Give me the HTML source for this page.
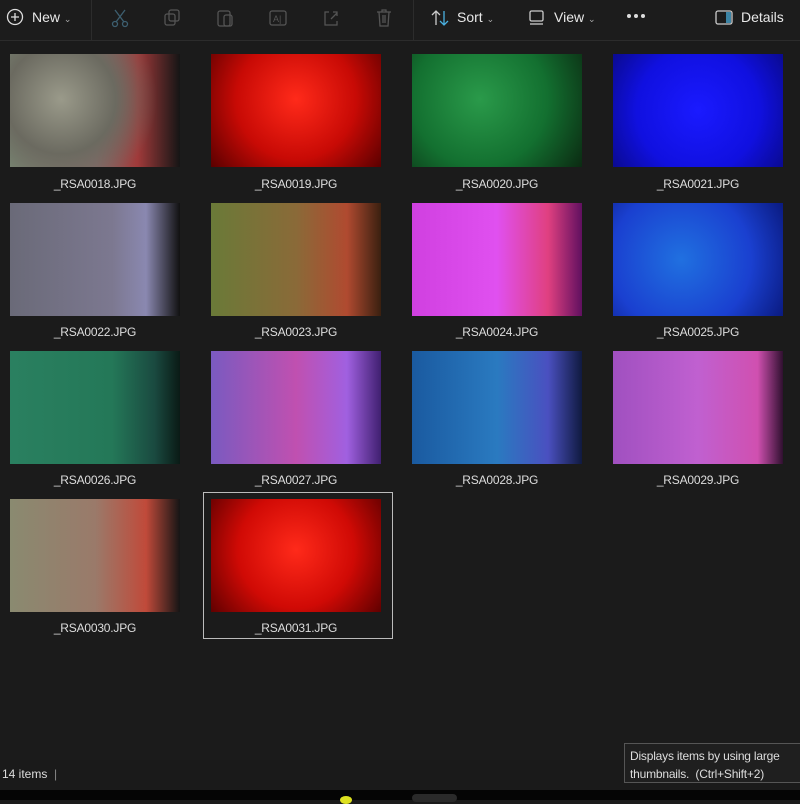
<!DOCTYPE html>
<html><head><style>
body{margin:0;width:800px;height:800px;background:#1b1b1b;font-family:"Liberation Sans",sans-serif;color:#e6e6e6;position:relative;overflow:hidden}
.tb{position:absolute;left:0;top:0;width:800px;height:40px;background:#1c1c1c;border-bottom:1px solid #2c2c2c}
.t{position:absolute;top:9px;font-size:14px;color:#e8e8e8}
.ic{position:absolute;top:7px}
.th{position:absolute;width:170px;height:113px}
.lb{position:absolute;width:170px;text-align:center;font-size:12px;color:#ddd;letter-spacing:-0.2px}
.sel{position:absolute;left:203px;top:492px;width:188px;height:145px;border:1px solid #bbb}
</style></head><body>
<div class="tb">
<svg class="ic" style="left:6px" width="20" height="20" viewBox="0 0 20 20"><circle cx="9" cy="10" r="7.5" fill="none" stroke="#ddd" stroke-width="1.3"/><path d="M9 6v8M5 10h8" stroke="#ddd" stroke-width="1.3"/></svg>
<div class="t" style="left:32px">New <span style="font-size:9px;color:#aaa">&#8964;</span></div>
<div style="position:absolute;left:91px;top:0;width:1px;height:40px;background:#2c2c2c"></div>
<svg class="ic" style="left:110px" width="20" height="22" viewBox="0 0 20 22"><path d="M5 3l9 12M15 3L6 15" stroke="#3d5f70" stroke-width="1.3" fill="none"/><circle cx="5" cy="17" r="2.5" fill="none" stroke="#3d5f70" stroke-width="1.3"/><circle cx="15" cy="17" r="2.5" fill="none" stroke="#3d5f70" stroke-width="1.3"/></svg>
<svg class="ic" style="left:163px" width="20" height="22" viewBox="0 0 20 22"><rect x="2" y="7" width="10" height="11" rx="2" fill="none" stroke="#555" stroke-width="1.3"/><rect x="6" y="3" width="10" height="11" rx="2" fill="none" stroke="#555" stroke-width="1.3"/></svg>
<svg class="ic" style="left:216px" width="20" height="22" viewBox="0 0 20 22"><rect x="2" y="4" width="12" height="15" rx="2" fill="none" stroke="#555" stroke-width="1.3"/><rect x="8" y="8" width="8" height="11" rx="2" fill="none" stroke="#555" stroke-width="1.3"/></svg>
<svg class="ic" style="left:268px" width="20" height="22" viewBox="0 0 20 22"><rect x="2" y="4" width="16" height="14" rx="2" fill="none" stroke="#555" stroke-width="1.3"/><text x="5" y="15" font-size="9" fill="#555">A|</text></svg>
<svg class="ic" style="left:321px" width="20" height="22" viewBox="0 0 20 22"><path d="M8 5H4v13h12v-4M10 12l6-6M12 5h4v4" fill="none" stroke="#555" stroke-width="1.3"/></svg>
<svg class="ic" style="left:374px" width="20" height="22" viewBox="0 0 20 22"><path d="M3 5h14M8 5V3h4v2M5 5l1 14h8l1-14M9 8v8M11 8v8" fill="none" stroke="#555" stroke-width="1.3"/></svg>
<div style="position:absolute;left:413px;top:0;width:1px;height:40px;background:#2c2c2c"></div>
<svg class="ic" style="left:430px" width="20" height="22" viewBox="0 0 20 22"><path d="M6 18V4M2 8l4-4 4 4" fill="none" stroke="#ccc" stroke-width="1.3"/><path d="M14 4v14M10 14l4 4 4-4" fill="none" stroke="#4ab0e0" stroke-width="1.3"/></svg>
<div class="t" style="left:457px">Sort <span style="font-size:9px;color:#aaa">&#8964;</span></div>
<svg class="ic" style="left:528px" width="18" height="22" viewBox="0 0 18 22"><rect x="2" y="4" width="13" height="10" rx="1.5" fill="none" stroke="#ccc" stroke-width="1.3"/><path d="M2 17h13" stroke="#ccc" stroke-width="1.3"/></svg>
<div class="t" style="left:554px">View <span style="font-size:9px;color:#aaa">&#8964;</span></div>
<svg style="position:absolute;left:626px;top:13px" width="20" height="6"><circle cx="3" cy="3" r="2" fill="#ddd"/><circle cx="10" cy="3" r="2" fill="#ddd"/><circle cx="17" cy="3" r="2" fill="#ddd"/></svg>
<svg class="ic" style="left:714px" width="20" height="22" viewBox="0 0 20 22"><rect x="2" y="4" width="16" height="13" rx="2" fill="none" stroke="#ccc" stroke-width="1.3"/><rect x="12" y="5" width="5" height="11" fill="#4ab0e0" opacity=".7"/></svg>
<div class="t" style="left:741px">Details</div>
</div>

<div class="th" style="left:10px;top:54px;background:radial-gradient(circle at 30% 40%,#9a9a8a,#6b6a60 40%,transparent 70%),linear-gradient(90deg,#7a8a75,#8a6b6a 50%,#a03a3a 75%,#151515)"></div>
<div class="th" style="left:211px;top:54px;background:radial-gradient(circle at 50% 40%,#ff2a1a,#c80a05 55%,#5a0000)"></div>
<div class="th" style="left:412px;top:54px;background:radial-gradient(circle at 40% 40%,#2a9a4a,#137030 55%,#0b2a12)"></div>
<div class="th" style="left:613px;top:54px;background:radial-gradient(circle at 50% 50%,#1a1aff,#1010e0 60%,#0a0a90)"></div>
<div class="lb" style="left:10px;top:177px">_RSA0018.JPG</div>
<div class="lb" style="left:211px;top:177px">_RSA0019.JPG</div>
<div class="lb" style="left:412px;top:177px">_RSA0020.JPG</div>
<div class="lb" style="left:613px;top:177px">_RSA0021.JPG</div>

<div class="th" style="left:10px;top:203px;background:linear-gradient(90deg,#6a6a78,#7c7890 60%,#8a88b0 80%,#111)"></div>
<div class="th" style="left:211px;top:203px;background:linear-gradient(90deg,#6a7a38,#8a6a38 50%,#b04a30 80%,#3a2010)"></div>
<div class="th" style="left:412px;top:203px;background:linear-gradient(90deg,#d040e0,#e050f0 50%,#e04080 80%,#601060)"></div>
<div class="th" style="left:613px;top:203px;background:radial-gradient(circle at 40% 50%,#2070e0,#1a40d0 60%,#0a1a80)"></div>
<div class="lb" style="left:10px;top:325px">_RSA0022.JPG</div>
<div class="lb" style="left:211px;top:325px">_RSA0023.JPG</div>
<div class="lb" style="left:412px;top:325px">_RSA0024.JPG</div>
<div class="lb" style="left:613px;top:325px">_RSA0025.JPG</div>

<div class="th" style="left:10px;top:351px;background:linear-gradient(90deg,#2a8060,#247858 60%,#1a4a40 85%,#0a1a15)"></div>
<div class="th" style="left:211px;top:351px;background:linear-gradient(90deg,#7a5ac0,#c050b0 50%,#a060e0 80%,#402070)"></div>
<div class="th" style="left:412px;top:351px;background:linear-gradient(90deg,#1a5aa0,#2a7ac0 50%,#4a50c0 80%,#101a40)"></div>
<div class="th" style="left:613px;top:351px;background:linear-gradient(90deg,#a050c0,#c060d0 50%,#d050b0 85%,#301030)"></div>
<div class="lb" style="left:10px;top:473px">_RSA0026.JPG</div>
<div class="lb" style="left:211px;top:473px">_RSA0027.JPG</div>
<div class="lb" style="left:412px;top:473px">_RSA0028.JPG</div>
<div class="lb" style="left:613px;top:473px">_RSA0029.JPG</div>

<div class="th" style="left:10px;top:499px;background:linear-gradient(90deg,#8a8a70,#9a7a6a 50%,#c04a3a 80%,#151515)"></div>
<div class="sel"></div>
<div class="th" style="left:211px;top:499px;background:radial-gradient(circle at 50% 45%,#ff2a1a,#d00a05 55%,#600000)"></div>
<div class="lb" style="left:10px;top:621px">_RSA0030.JPG</div>
<div class="lb" style="left:211px;top:621px">_RSA0031.JPG</div>

<div style="position:absolute;left:0;top:760px;width:800px;height:30px;background:#1a1a1a"></div>
<div style="position:absolute;left:2px;top:767px;font-size:12px;color:#ddd">14 items &nbsp;<span style="color:#888">|</span></div>
<div style="position:absolute;left:624px;top:743px;width:180px;height:40px;background:#1f1f1f;border:1px solid #555;font-size:12px;color:#ddd;padding:3px 0 0 5px;line-height:18px;box-sizing:border-box;letter-spacing:-0.2px">Displays items by using large thumbnails.&nbsp; (Ctrl+Shift+2)</div>
<div style="position:absolute;left:0;top:790px;width:800px;height:10px;background:#050505"></div>
<div style="position:absolute;left:340px;top:796px;width:12px;height:8px;border-radius:50%;background:#dde020"></div>
<div style="position:absolute;left:412px;top:794px;width:45px;height:8px;border-radius:4px;background:#2a2a2a"></div>
</body></html>
